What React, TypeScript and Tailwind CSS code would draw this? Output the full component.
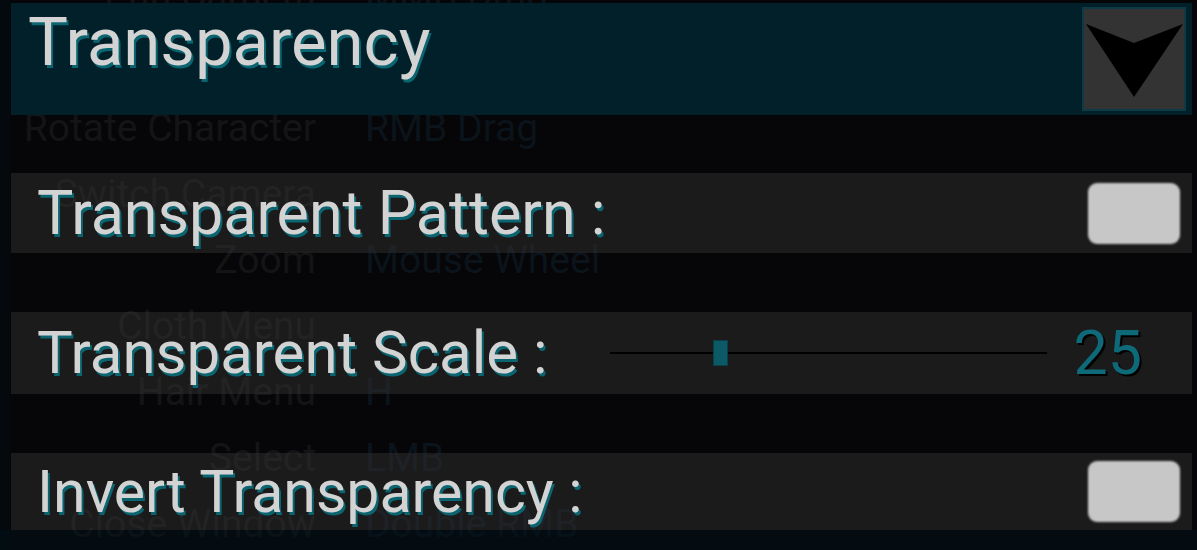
import React from "react";

const ghostRows: [string, string][] = [
  ["Pan Camera", "MMB Drag"],
  ["Move Camera", "WASD"],
  ["Rotate Character", "RMB Drag"],
  ["Switch Camera", ""],
  ["Zoom", "Mouse Wheel"],
  ["Cloth Menu", ""],
  ["Hair Menu", "H"],
  ["Select", "LMB"],
  ["Close Window", "Double RMB"],
];

function Checkbox() {
  return <div className="w-[92px] h-[61px] rounded-[9px] bg-[#c7c7c7] blur-[1px]" />;
}

const labelCls =
  "text-[60px] leading-none text-[#d3d3d3] [text-shadow:2px_3px_0_#0b6571] whitespace-nowrap";

export default function App() {
  return (
    <div
      className="relative w-[1197px] h-[550px] overflow-hidden bg-[#060608]"
      style={{ fontFamily: "Roboto, 'Liberation Sans', sans-serif" }}
    >
      {/* underlying key-binding list */}
      <div className="flex flex-col mt-[-37px] border-l-[10px] border-[#03090c] h-[600px]">
        {ghostRows.map(([k, v], i) => (
          <div key={i} className="flex items-center h-[66px] gap-[49px] text-[39px] leading-none">
            <div className="w-[306px] text-right text-[#141416] whitespace-nowrap">{k}</div>
            <div className="text-[#0b131b] whitespace-nowrap">{v}</div>
          </div>
        ))}
      </div>

      {/* overlay panel */}
      <div className="absolute inset-0 flex flex-col pl-[11px] pr-[5px] pt-[3px]">
        <div className="h-[112px] bg-[#012029] flex items-center justify-between pl-[17px] pr-[6px]">
          <div className="text-[67px] leading-none text-[#d3d3d3] [text-shadow:2px_3px_0_#0b6571] self-start mt-[6px]">
            Transparency
          </div>
          <div className="w-[104px] h-[104px] bg-[#333333] border-2 border-[#0c3a45] flex items-center justify-center">
            <svg width="100" height="100" viewBox="0 0 100 100">
              <polygon points="2,15 50,34 99,15 50,88" fill="#000000" />
            </svg>
          </div>
        </div>

        <div className="mt-[58px] h-[80px] bg-[rgba(53,53,53,0.45)] flex items-center justify-between pl-[26px] pr-[12px]">
          <div className="text-[61px] leading-none text-[#d3d3d3] [text-shadow:2px_3px_0_#0b6571] whitespace-nowrap">
            Transparent Pattern :
          </div>
          <Checkbox />
        </div>

        <div className="mt-[59px] h-[82px] bg-[rgba(53,53,53,0.45)] flex items-center pl-[26px] pr-[50px]">
          <div className={labelCls + " w-[573px] shrink-0"}>Transparent Scale :</div>
          <div className="w-[437px] h-[26px] relative flex items-center">
            <div className="w-full h-[2px] bg-black" />
            <div className="absolute left-[103px] top-0 w-[15px] h-[26px] bg-[#0b5a66] border border-[#083f48]" />
          </div>
          <div className="ml-auto text-[61px] leading-none text-[#0e6a78] [text-shadow:2px_2px_0_#000]">25</div>
        </div>

        <div className="mt-[59px] h-[77px] bg-[rgba(53,53,53,0.45)] flex items-center justify-between pl-[26px] pr-[12px]">
          <div className="text-[59px] leading-none text-[#d3d3d3] [text-shadow:2px_3px_0_#0b6571] whitespace-nowrap">
            Invert Transparency :
          </div>
          <Checkbox />
        </div>

        <div className="flex-1 bg-[rgba(2,18,26,0.5)] -ml-[11px] -mr-[5px]" />
      </div>
    </div>
  );
}
